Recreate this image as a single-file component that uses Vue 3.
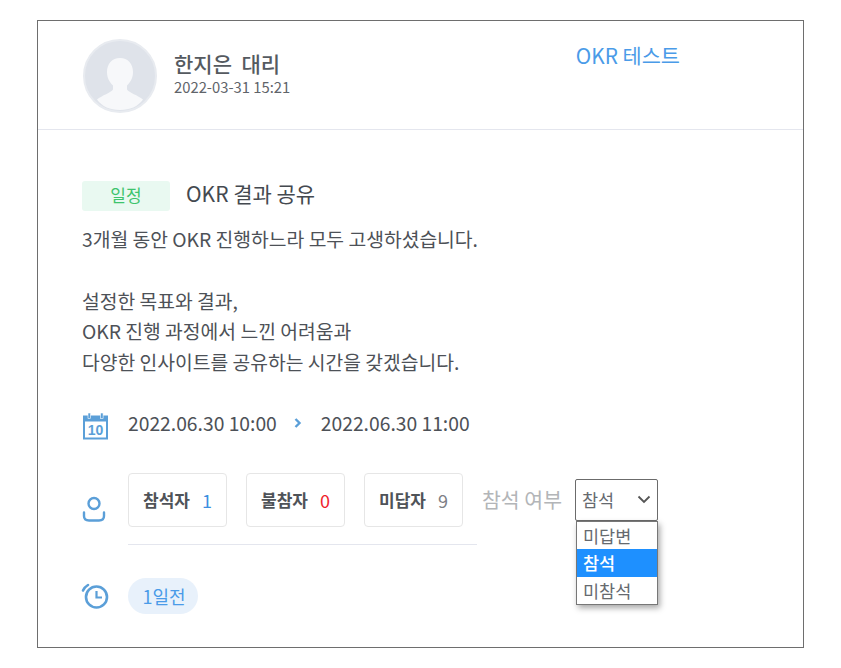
<template>
  <div class="page">
    <div class="card">
      <header class="head">
        <div class="author">
          <div class="avatar">
            <svg width="74" height="74" viewBox="0 0 74 74">
              <defs>
                <clipPath id="round"><circle cx="37" cy="37" r="35" /></clipPath>
              </defs>
              <circle cx="37" cy="37" r="36" fill="#dfe3ea" stroke="#e8ebf0" stroke-width="2" />
              <g clip-path="url(#round)" fill="#f7f8fa">
                <path d="M37 19c-8 0-13 6-13 14 0 6 2.500 10 6 13.500v4c-2 3-11 6-16 10 5 7 13 10.500 23 10.500s18-3.500 23-10.500c-5-4-14-7-16-10v-4c3.500-3.500 6-7.500 6-13.500 0-8-5-14-13-14z" />
              </g>
            </svg>
          </div>
          <div class="who">
            <div class="name">한지은&nbsp; 대리</div>
            <div class="stamp">2022-03-31 15:21</div>
          </div>
        </div>
        <a class="link">OKR 테스트</a>
      </header>

      <section class="body">
        <div class="title-row">
          <span class="tag">일정</span>
          <span class="title">OKR 결과 공유</span>
        </div>
        <p class="desc">3개월 동안 OKR 진행하느라 모두 고생하셨습니다.<br><br>설정한 목표와 결과,<br>OKR 진행 과정에서 느낀 어려움과<br>다양한 인사이트를 공유하는 시간을 갖겠습니다.</p>

        <div class="row dates">
          <svg class="ico" width="28" height="28" viewBox="0 0 28 28" fill="none">
            <path d="M1 3.500h25v24h-25z" fill="#5b9fd8" />
            <rect x="3" y="9.500" width="21" height="16" fill="#fff" />
            <rect x="6" y="1" width="2.600" height="5.500" fill="#5b9fd8" stroke="#fff" stroke-width="0.600" />
            <rect x="18.500" y="1" width="2.600" height="5.500" fill="#5b9fd8" stroke="#fff" stroke-width="0.600" />
            <text x="13.500" y="23" text-anchor="middle" class="cal-num">10</text>
          </svg>
          <span>{{ from }}</span>
          <svg class="arrow" width="8" height="10" viewBox="0 0 8 10" fill="none">
            <path d="M1.500 1l4 4-4 4" stroke="#5b9fd8" stroke-width="2.400" />
          </svg>
          <span>{{ to }}</span>
        </div>

        <div class="row people">
          <svg class="ico user" width="28" height="28" viewBox="0 0 28 28" fill="none" stroke="#5b9fd8" stroke-width="2.400">
            <circle cx="14" cy="8.500" r="5.500" />
            <path d="M4 17.500v3.500c0 3 2 4.500 5 4.500h10c3 0 5-1.500 5-4.500v-3.500" stroke-linecap="round" />
          </svg>
          <div class="stats">
            <div class="chips">
              <div v-for="s in stats" :key="s.label" class="chip">
                <b>{{ s.label }}</b>
                <span :class="s.tone">{{ s.count }}</span>
              </div>
            </div>
          </div>
          <span class="ask">참석 여부</span>
          <div class="select">
            <div class="select-box">
              <span>참석</span>
              <svg width="14" height="9" viewBox="0 0 14 9" fill="none">
                <path d="M1.500 1.500l5.500 5.500 5.500-5.500" stroke="#555" stroke-width="1.800" />
              </svg>
            </div>
            <ul class="menu">
              <li v-for="o in options" :key="o" :class="{ on: o === '참석' }">{{ o }}</li>
            </ul>
          </div>
        </div>

        <div class="row alarm">
          <svg class="ico" width="28" height="28" viewBox="0 0 28 28" fill="none" stroke="#5b9fd8" stroke-width="2.600">
            <circle cx="15.500" cy="15" r="10.500" />
            <path d="M15.500 9v6.500h5.500" stroke-width="2.200" />
            <path d="M2 8.500c1-2.500 2.500-4 5-5.500" stroke-linecap="round" />
          </svg>
          <span class="pill">1일전</span>
        </div>
      </section>
    </div>
  </div>
</template>

<script setup>
const from = '2022.06.30 10:00'
const to = '2022.06.30 11:00'

const stats = [
  { label: '참석자', count: 1, tone: 'blue' },
  { label: '불참자', count: 0, tone: 'red' },
  { label: '미답자', count: 9, tone: 'grey' }
]

const options = ['미답변', '참석', '미참석']
</script>

<style>
html, body {
  margin: 0;
  background: #fff;
}
</style>

<style scoped>
.page {
  padding: 20px 37px;
  width: 841px;
  height: 668px;
  box-sizing: border-box;
  font-family: "Noto Sans CJK KR", "Noto Sans", sans-serif;
  color: #4d5157;
}

.card {
  width: 767px;
  height: 628px;
  box-sizing: border-box;
  border: 1px solid #6e6e6e;
  background: #fff;
}

.head {
  display: flex;
  justify-content: space-between;
  align-items: flex-start;
  height: 109px;
  box-sizing: border-box;
  padding: 18px 123px 0 45px;
  border-bottom: 1px solid #e4e6ee;
}

.author {
  display: flex;
  align-items: center;
  gap: 17px;
}

.avatar {
  width: 74px;
  height: 74px;
}

.avatar svg {
  display: block;
}

.who {
  margin-top: -5px;
}

.name {
  font-size: 21px;
  font-weight: 500;
  line-height: 25px;
  color: #555a60;
}

.stamp {
  font-size: 14.800px;
  line-height: 21px;
  color: #5f646a;
}

.link {
  margin-top: 2px;
  font-size: 20.800px;
  line-height: 29px;
  color: #4a9be8;
}

.body {
  padding: 49px 44px 0;
}

.title-row {
  display: flex;
  align-items: center;
  gap: 16px;
  height: 32px;
}

.tag {
  margin-top: 1px;
  width: 88px;
  height: 30px;
  border-radius: 3px;
  background: #e9f9f1;
  color: #3dc46d;
  font-size: 17px;
  line-height: 28px;
  text-align: center;
}

.title {
  margin-top: -4px;
  font-size: 21px;
  line-height: 32px;
  color: #44494f;
}

.desc {
  margin: 13px 0 0;
  font-size: 19.300px;
  line-height: 30.800px;
  color: #4d5157;
}

.row {
  display: flex;
  align-items: center;
}

.ico {
  flex: none;
}

.cal-num {
  font-size: 14px;
  font-weight: 700;
  fill: #5b9fd8;
  font-family: "Liberation Sans", sans-serif;
}

.dates {
  margin-top: 30px;
  gap: 17px;
  height: 30px;
  font-size: 19.300px;
  color: #4d5157;
}

.dates .ico {
  margin: 6px 1px 0 0;
}

.arrow {
  margin-right: 2px;
}

.people {
  margin-top: 35px;
  height: 72px;
  align-items: flex-start;
}

.user {
  margin: 22px 20px 0 -2px;
}

.stats {
  width: 349px;
  height: 71px;
  border-bottom: 1px solid #e4e6ee;
}

.chips {
  display: flex;
  gap: 19px;
}

.chip {
  display: flex;
  align-items: center;
  justify-content: center;
  gap: 12px;
  box-sizing: border-box;
  width: 99px;
  height: 54px;
  border: 1px solid #e6e6e6;
  border-radius: 4px;
  font-size: 18px;
}

.chip b {
  font-weight: 700;
  font-size: 17px;
  color: #4f5358;
}

.blue {
  color: #3d8fe0;
}

.red {
  color: #f01e2c;
}

.grey {
  color: #7d8085;
}

.ask {
  margin: 12px 0 0 5px;
  width: 93px;
  font-size: 20.500px;
  line-height: 28px;
  color: #b3b5b8;
  white-space: nowrap;
}

.select {
  position: relative;
  margin-top: 6px;
  width: 83px;
}

.select-box {
  display: flex;
  align-items: center;
  justify-content: space-between;
  box-sizing: border-box;
  height: 42px;
  padding: 0 6px;
  border: 1px solid #6b6b6b;
  border-radius: 2px;
  font-size: 17.500px;
  color: #666a6f;
}

.menu {
  position: absolute;
  top: 42px;
  left: 1px;
  width: 82px;
  box-sizing: border-box;
  margin: 0;
  padding: 0;
  list-style: none;
  border: 1px solid #777;
  background: #fff;
  box-shadow: 2px 3px 6px rgba(0, 0, 0, 0.35);
}

.menu li {
  height: 27.300px;
  padding-left: 6px;
  font-size: 17.500px;
  line-height: 27px;
  color: #666a6f;
}

.menu li.on {
  background: #1e90ff;
  color: #fff;
  font-weight: 500;
}

.alarm {
  margin-top: 33px;
  gap: 18px;
  height: 36px;
}

.alarm .ico {
  margin: 0 1px 0 -1px;
}

.pill {
  width: 70px;
  height: 36px;
  padding-left: 2px;
  box-sizing: border-box;
  border-radius: 18px;
  background: #e8f1fb;
  color: #4a9be8;
  font-size: 18px;
  line-height: 36px;
  text-align: center;
}
</style>
